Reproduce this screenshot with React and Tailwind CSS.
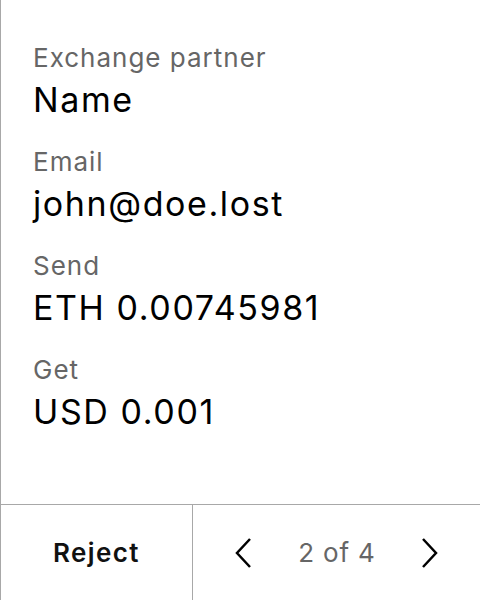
export default function App() {
  const rows = [
    { label: "Exchange partner", value: "Name" },
    { label: "Email", value: "john@doe.lost" },
    { label: "Send", value: "ETH 0.00745981" },
    { label: "Get", value: "USD 0.001" },
  ];

  return (
    <div
      className="w-[480px] h-[600px] flex flex-col bg-white border-l border-[#a8a8a8]"
      style={{ fontFamily: "Inter, 'Noto Sans', sans-serif" }}
    >
      {/* details */}
      <div className="flex-1 flex flex-col gap-[20px] pl-8 pt-[40px]">
        {rows.map((row) => (
          <div key={row.label} className="flex flex-col">
            <span className="text-[26px] leading-[36px] tracking-[1px] text-[#666666]">{row.label}</span>
            <span className="text-[34px] leading-[48px] tracking-[1.6px] text-black">{row.value}</span>
          </div>
        ))}
      </div>

      {/* footer */}
      <div className="h-[96px] flex border-t border-[#a8a8a8]">
        <button className="w-[191px] flex items-center justify-center text-[26px] font-semibold tracking-[1.4px] text-[#111]">
          Reject
        </button>
        <div className="flex-1 flex items-center justify-center gap-[47px] border-l border-[#a8a8a8]">
          <svg width="16" height="32" viewBox="0 0 16 32" fill="none" stroke="black" strokeWidth="2.5">
            <path d="M15 2 L2 16 L15 30" />
          </svg>
          <span className="text-[26px] tracking-[0.8px] text-[#666666] -mr-[1px]">2 of 4</span>
          <svg width="16" height="32" viewBox="0 0 16 32" fill="none" stroke="black" strokeWidth="2.5">
            <path d="M1 2 L14 16 L1 30" />
          </svg>
        </div>
      </div>
    </div>
  );
}
